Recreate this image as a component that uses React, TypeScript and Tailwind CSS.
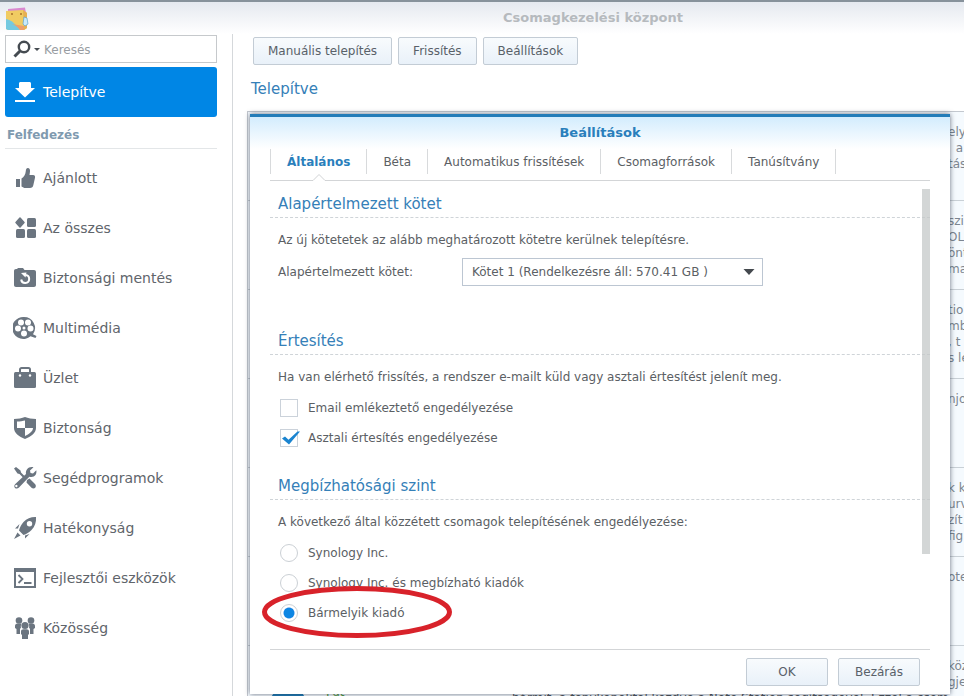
import React, { useState } from 'react';

interface Category {
  label: string;
  icon: React.ReactNode;
}

const categories: Category[] = [
  {
    label: 'Ajánlott',
    icon: (
      <>
        <path d="M3 13h4v8H3z" />
        <path d="M8.500 12.500c2.500-1.500 4-4 4.300-7.500.1-2 .9-3 2-3 1.700 0 2.400 1.500 2.200 3.500L16.500 9H20c1.700 0 2.400 1.200 2 2.800l-1.700 7.400c-.4 1.700-1.400 2.800-3.300 2.800h-4.500c-1.700 0-2.600-.6-4-1.500z" />
      </>
    )
  },
  {
    label: 'Az összes',
    icon: (
      <>
        <path d="M7 2 11 6.500 7 11 3 6.500z" stroke="currentColor" strokeWidth="1.500" strokeLinejoin="round" />
        <rect x="14" y="2" width="9" height="9" rx="1.500" />
        <rect x="3" y="13" width="9" height="9" rx="1.500" />
        <rect x="14" y="13" width="9" height="9" rx="1.500" />
      </>
    )
  },
  {
    label: 'Biztonsági mentés',
    icon: (
      <>
        <path d="M1 5c0-1.200.8-2 2-2h1l1-1h5l1.500 2H21c1.200 0 2 .8 2 2v13c0 1.200-.8 2-2 2H3c-1.200 0-2-.8-2-2z" />
        <path d="M12.500 9a4 4 0 1 1-4.300 4.500" fill="none" stroke="white" strokeWidth="2" />
        <path d="M8 7l5.500-.5-1 5z" fill="white" />
      </>
    )
  },
  {
    label: 'Multimédia',
    icon: (
      <>
        <path
          fillRule="evenodd"
          d="M11 1a11 11 0 0 1 9 17.300l3.500 1.700-1 2-5-1.800A11 11 0 1 1 11 1zM8 3.500a3 3 0 1 0 0 6 3 3 0 0 0 0-6zm7 0a3 3 0 1 0 0 6 3 3 0 0 0 0-6zM5 9.500a3 3 0 1 0 0 6 3 3 0 0 0 0-6zm12.500 0a3 3 0 1 0 0 6 3 3 0 0 0 0-6zM11 14.500a3 3 0 1 0 0 6 3 3 0 0 0 0-6zM11 10.500a1.500 1.500 0 1 0 0 3 1.500 1.500 0 0 0 0-3z"
        />
      </>
    )
  },
  {
    label: 'Üzlet',
    icon: (
      <>
        <path d="M7 6V3.500C7 2.700 7.700 2 8.500 2h7c.8 0 1.500.7 1.500 1.500V6" fill="none" stroke="currentColor" strokeWidth="2" />
        <rect x="1" y="6" width="22" height="16" rx="1.500" />
        <circle cx="7" cy="9.500" r="1.200" fill="white" />
        <circle cx="17" cy="9.500" r="1.200" fill="white" />
      </>
    )
  },
  {
    label: 'Biztonság',
    icon: (
      <>
        <path d="M1 3c4 0 8-.8 11-2 3 1.200 7 2 11 2v9c0 5-5 8.500-11 11C6 20.500 1 17 1 12z" />
        <path d="M4 5.500c3 0 6-.5 8-1V12H4zM12 12h8c0 3.500-4 6-8 8z" fill="white" />
      </>
    )
  },
  {
    label: 'Segédprogramok',
    icon: (
      <>
        <path d="M1 2.500 3 1l4.500 3.500.5 2 5 5-1.500 1.500-5-5-2-.5z" />
        <path d="m14 14 2.500-1.500 5.500 5.500c1.200 1.200 1 2.800.2 3.800s-2.700 1-3.700 0L13.500 16.500z" />
        <path d="M20.500 1.200 17 4.500l.5 2.500 2.500.5 3.300-3.200c.7 3.500-1.200 6.700-5 6.700-.8 0-1.400-.1-2-.3L6 21.500C4.800 22.800 3 22.800 2 21.900c-1-1-1-2.800.3-4L13 8c-.8-4 2.500-8 7.500-6.800zM4 19a1.200 1.200 0 1 0 0 2 1.200 1.200 0 0 0 0-2z" fillRule="evenodd" />
      </>
    )
  },
  {
    label: 'Hatékonyság',
    icon: (
      <>
        <path
          fillRule="evenodd"
          d="M23 1c.4 5-1 9.500-4.500 13-2.500 2.500-5 4-8 5L6 14.500c.8-3.200 2.300-6 4.500-8.500C14 2.300 18 .8 23 1zm-6.500 4a2.700 2.700 0 1 0 0 5.400 2.700 2.700 0 0 0 0-5.400z"
        />
        <path d="M6.500 8 2 12.500h3zM16.500 18 12 22.500v-3zM4.500 16.500l3 3L1 23z" />
      </>
    )
  },
  {
    label: 'Fejlesztői eszközök',
    icon: (
      <>
        <path fillRule="evenodd" d="M1 2h22v20H1zm2 4v14h18V6z" />
        <path d="m5.500 9 4 4-4 4M11 17h7.500" fill="none" stroke="currentColor" strokeWidth="1.800" />
      </>
    )
  },
  {
    label: 'Közösség',
    icon: (
      <>
        <circle cx="6" cy="4.500" r="3.300" />
        <circle cx="18" cy="4.500" r="3.300" />
        <path d="M2 10c0-1.500 1-2.500 2.500-2.500h4C8 9 7.500 10 8 11.500L7 13v5H3.500v-5L2 12zM22 10c0-1.500-1-2.500-2.500-2.500h-4c.5 1.500 1 2.500.5 4l1 1.500v5h3.500v-5l1.500-1z" />
        <circle cx="12" cy="9.500" r="3.600" />
        <path d="M8 15.500c0-1.500 1-2.300 2.500-2.300h3c1.500 0 2.500.8 2.500 2.300V18l-1 1v4H9v-4l-1-1z" />
      </>
    )
  }
];

const packages = [
  ['ely', '  a', 'tás'],
  ['szi', 'OL,', 'önt', 'ma'],
  ['tio', 'mbö', ', t', 's le'],
  ['njo'],
  ['k k', 'urv', 'zít', 'fig'],
  ['ote'],
  ['köz', 'gje']
];

const tabs = ['Általános', 'Béta', 'Automatikus frissítések', 'Csomagforrások', 'Tanúsítvány'];

const publishers = ['Synology Inc.', 'Synology Inc. és megbízható kiadók', 'Bármelyik kiadó'];

const buttonClass =
  'h-7 rounded-[2px] border border-[#c3ccd5] bg-linear-to-b from-[#f8fbfd] to-[#e9f1f9] text-xs text-[#596169]';

const Section: React.FC<{ title: string; text: string; children: React.ReactNode }> = ({
  title,
  text,
  children
}) => (
  <section>
    <h3 className="border-b border-dashed border-[#cfd4d8] px-2 pt-0.5 text-[15px] leading-[26px] text-[#3580b8]">
      {title}
    </h3>
    <p className="mt-3 px-2 leading-5">{text}</p>
    {children}
  </section>
);

const Sidebar: React.FC = () => (
  <aside className="flex w-[233px] shrink-0 flex-col border-r border-[#d5d8db] pt-px pr-[15px] pl-[5px]">
    <label className="flex h-7 items-center border border-[#c6c9cc] bg-white pl-[7px]">
      <svg viewBox="0 0 18 18" className="size-[18px] text-[#454b51]" aria-hidden="true">
        <circle cx="11" cy="7" r="5.200" fill="none" stroke="currentColor" strokeWidth="2.400" />
        <path d="m7 11-5.500 5.500" stroke="currentColor" strokeWidth="3" />
      </svg>
      <svg viewBox="0 0 6 3" className="ml-[3px] h-[3px] w-1.5 text-[#454b51]" aria-hidden="true">
        <path d="M0 0h6L3 3z" fill="currentColor" />
      </svg>
      <input
        type="text"
        aria-label="Keresés"
        placeholder="Keresés"
        className="ml-1 min-w-0 flex-1 pt-px text-xs outline-none placeholder:text-[#989da2]"
      />
    </label>
    <nav>
      <button className="mt-1 flex h-[50px] w-full items-center gap-1.5 rounded-[3px] bg-[#0086e5] pl-2 text-sm text-white">
        <svg viewBox="0 0 24 24" className="size-6" fill="currentColor" aria-hidden="true">
          <path d="M6 3.500C6 2.600 6.600 2 7.500 2h9c.9 0 1.500.6 1.500 1.500V8h4L12 17.500 2 8h4zM2 20h20v2H2z" />
        </svg>
        Telepítve
      </button>
      <h2 className="mb-1 border-b border-[#e3e6e8] px-0.5 pt-2 pb-[3px] text-xs leading-5 font-bold text-[#7f9aaf]">
        Felfedezés
      </h2>
      <ul>
        {categories.map(({ label, icon }) => (
          <li key={label}>
            <button className="flex h-[50px] w-full items-center gap-1.5 pl-2 text-sm text-[#5f656b]">
              <svg viewBox="0 0 24 24" className="size-6 text-[#6b7580]" fill="currentColor" aria-hidden="true">
                {icon}
              </svg>
              {label}
            </button>
          </li>
        ))}
      </ul>
    </nav>
  </aside>
);

const PackageList: React.FC = () => (
  <ul className="h-full overflow-hidden text-xs leading-4 text-[#7c8690]">
    {packages.map((lines, index) => (
      <li key={index} className="flex h-[89px] justify-end border-b border-[#c9d0d6] bg-[#f5fafe] pt-3">
        {index === packages.length - 1 && (
          <>
            <div className="mt-7 ml-[22px] size-9 rounded-full bg-[#1879b5]" />
            <span className="mt-[26px] ml-5 text-[#4f9a3c]">Fut</span>
            <p className="mt-8 ml-auto w-[436px] overflow-hidden whitespace-nowrap text-[#4c5157]">
              bármit, a fényképektől kezdve a Note Station segítségével. Ezzel a csomag
            </p>
          </>
        )}
        <div className="w-4 shrink-0 whitespace-pre">
          {lines.map((line) => (
            <p key={line}>{line}</p>
          ))}
        </div>
      </li>
    ))}
  </ul>
);

const SettingsDialog: React.FC = () => {
  const [activeTab, setActiveTab] = useState(tabs[0]);
  const [emailReminder, setEmailReminder] = useState(false);
  const [desktopNotice, setDesktopNotice] = useState(true);
  const [publisher, setPublisher] = useState(publishers[2]);

  const notifications = [
    { label: 'Email emlékeztető engedélyezése', checked: emailReminder, onChange: setEmailReminder },
    { label: 'Asztali értesítés engedélyezése', checked: desktopNotice, onChange: setDesktopNotice }
  ];

  return (
    <div
      role="dialog"
      aria-labelledby="settings-title"
      className="absolute inset-y-0.5 right-3.5 left-0.5 flex flex-col border-t-[3px] border-[#237cb8] bg-white px-5 text-xs text-[#5b6064] shadow-[0_0_5px_rgba(40,50,70,0.7)]"
    >
      <div className="-mx-5 bg-linear-to-b from-[#d3ecfd] to-white">
        <h2 id="settings-title" className="h-8 text-center text-[13px] leading-8 font-bold text-[#2a7fbc]">
          Beállítások
        </h2>
      </div>
      <div role="tablist" className="flex border-b border-[#d3d5d7] pb-1.5">
        {tabs.map((tab, index) => (
          <button
            key={tab}
            role="tab"
            aria-selected={tab === activeTab}
            onClick={() => setActiveTab(tab)}
            className={`relative h-[25px] border-r border-[#d8dadc] px-4 ${index === 0 ? 'border-l' : ''} ${
              tab === activeTab ? 'font-bold text-[#2a7fbc]' : ''
            }`}
          >
            {tab}
            {tab === activeTab && (
              <svg viewBox="0 0 14 8" className="absolute top-full left-1/2 h-2 w-3.5 -translate-x-1/2" aria-hidden="true">
                <path d="M0 7 7 0.500 14 7V8H0z" fill="white" />
                <path d="M0 6.500h1L7 0.500l6 6h1" fill="none" stroke="#d0d2d4" />
              </svg>
            )}
          </button>
        ))}
      </div>

      <div className="relative min-h-0 flex-1 pt-2">
        <Section title="Alapértelmezett kötet" text="Az új kötetetek az alább meghatározott kötetre kerülnek telepítésre.">
          <div className="mt-2 mb-10 flex items-center px-2">
            <label htmlFor="volume" className="w-[184px]">
              Alapértelmezett kötet:
            </label>
            <div className="relative w-[301px]">
              <select
                id="volume"
                className="h-7 w-full appearance-none border border-[#bcc6d2] bg-white pr-7 pl-[9px] outline-none"
              >
                <option>Kötet 1 (Rendelkezésre áll: 570.41 GB )</option>
              </select>
              <svg viewBox="0 0 12 6" className="pointer-events-none absolute top-[11px] right-2 h-1.5 w-3" aria-hidden="true">
                <path d="M0.500 0h11L6 6z" fill="#44494e" />
              </svg>
            </div>
          </div>
        </Section>

        <Section
          title="Értesítés"
          text="Ha van elérhető frissítés, a rendszer e-mailt küld vagy asztali értesítést jelenít meg."
        >
          <div className="mt-1.5 mb-[18px] px-2">
            {notifications.map(({ label, checked, onChange }) => (
              <label key={label} className="flex h-[30px] items-center gap-2.5 pl-0.5">
                <span className="relative flex">
                  <input
                    type="checkbox"
                    checked={checked}
                    onChange={(e) => onChange(e.target.checked)}
                    className="size-[18px] appearance-none border border-[#cbd2da] bg-white"
                  />
                  {checked && (
                    <svg viewBox="0 0 20 18" className="pointer-events-none absolute top-0 left-0 h-[18px] w-5" aria-hidden="true">
                      <path d="M2 9.500 5 7.500l3.500 3.200L17.500 2.500h2.500L9 15.500z" fill="#1a84d0" />
                    </svg>
                  )}
                </span>
                {label}
              </label>
            ))}
          </div>
        </Section>

        <Section
          title="Megbízhatósági szint"
          text="A következő által közzétett csomagok telepítésének engedélyezése:"
        >
          <div className="mt-1.5 px-2">
            {publishers.map((name) => (
              <label key={name} className="relative flex h-[30px] items-center gap-2.5 pl-0.5">
                <input
                  type="radio"
                  name="publisher"
                  checked={publisher === name}
                  onChange={() => setPublisher(name)}
                  className="size-[18px] appearance-none rounded-full border border-[#cbd0d5] bg-white checked:bg-radial checked:from-[#0d86e3] checked:from-[5px] checked:to-white checked:to-[6px]"
                />
                {name}
                {name === publishers[2] && (
                  <svg
                    viewBox="0 0 192 54"
                    className="pointer-events-none absolute -top-3 -left-[17px] h-[54px] w-48"
                    aria-hidden="true"
                  >
                    <ellipse cx="96" cy="26" rx="92.500" ry="23.500" fill="none" stroke="#d8222a" strokeWidth="5" />
                  </svg>
                )}
              </label>
            ))}
          </div>
        </Section>

        <div className="absolute top-2 right-0 h-[365px] w-2 bg-[#c4c8c8]/75" />
      </div>

      <div className="flex justify-end gap-2.5 border-t border-[#d3d5d7] pt-2 pr-2.5 pb-2">
        <button className={`${buttonClass} w-[82px]`}>OK</button>
        <button className={`${buttonClass} w-[82px]`}>Bezárás</button>
      </div>
    </div>
  );
};

const App: React.FC = () => (
  <div className="flex h-screen flex-col overflow-hidden bg-white font-['DejaVu_Sans',sans-serif]">
    <header className="flex h-[34px] shrink-0 border-t-2 border-[#87929b] bg-linear-to-b from-[#e5e9ef] to-white">
      <div className="w-[222px] pt-[5px] pl-[5px]">
        <svg viewBox="0 0 24 24" className="size-6" aria-hidden="true">
          <path d="M3 2 20 .5 21 6H3z" fill="#d989cf" />
          <path d="M1 4 18 3l4 3v15l-3 2H3l-2-1z" fill="#f0cb62" />
          <path d="M18 3l4 3v15l-3 2z" fill="#e6b052" />
          <path d="M1 12c5 1 10 5 14 11H3l-2-1z" fill="#74c9e0" />
          <path d="M7 17c3 1 6 3 8 6h4v-4z" fill="#ef9f6a" />
          <circle cx="7" cy="7" r="1" fill="#a8702c" />
          <circle cx="16" cy="7" r="1" fill="#a8702c" />
          <path d="m19 10 3 1 1 6-3 2-2-2z" fill="#c9eafa" stroke="#5da5d3" strokeWidth="0.700" />
        </svg>
      </div>
      <h1 className="flex-1 text-center text-[13px] leading-8 font-bold text-[#b6babe]">Csomagkezelési központ</h1>
    </header>
    <div className="flex min-h-0 flex-1">
      <Sidebar />
      <main className="flex min-w-0 flex-1 flex-col pl-3.5">
        <div className="flex gap-1.5 pt-[3px] pl-1.5">
          <button className={`${buttonClass} px-3.5`}>Manuális telepítés</button>
          <button className={`${buttonClass} px-3.5`}>Frissítés</button>
          <button className={`${buttonClass} px-3.5`}>Beállítások</button>
        </div>
        <h2 className="pt-2.5 pb-2 pl-1 text-[15px] leading-7 text-[#3580b8]">Telepítve</h2>
        <div className="relative min-h-0 flex-1 border-t border-l border-[#c3c8cf]">
          <PackageList />
          <SettingsDialog />
        </div>
      </main>
    </div>
  </div>
);

export default App;
